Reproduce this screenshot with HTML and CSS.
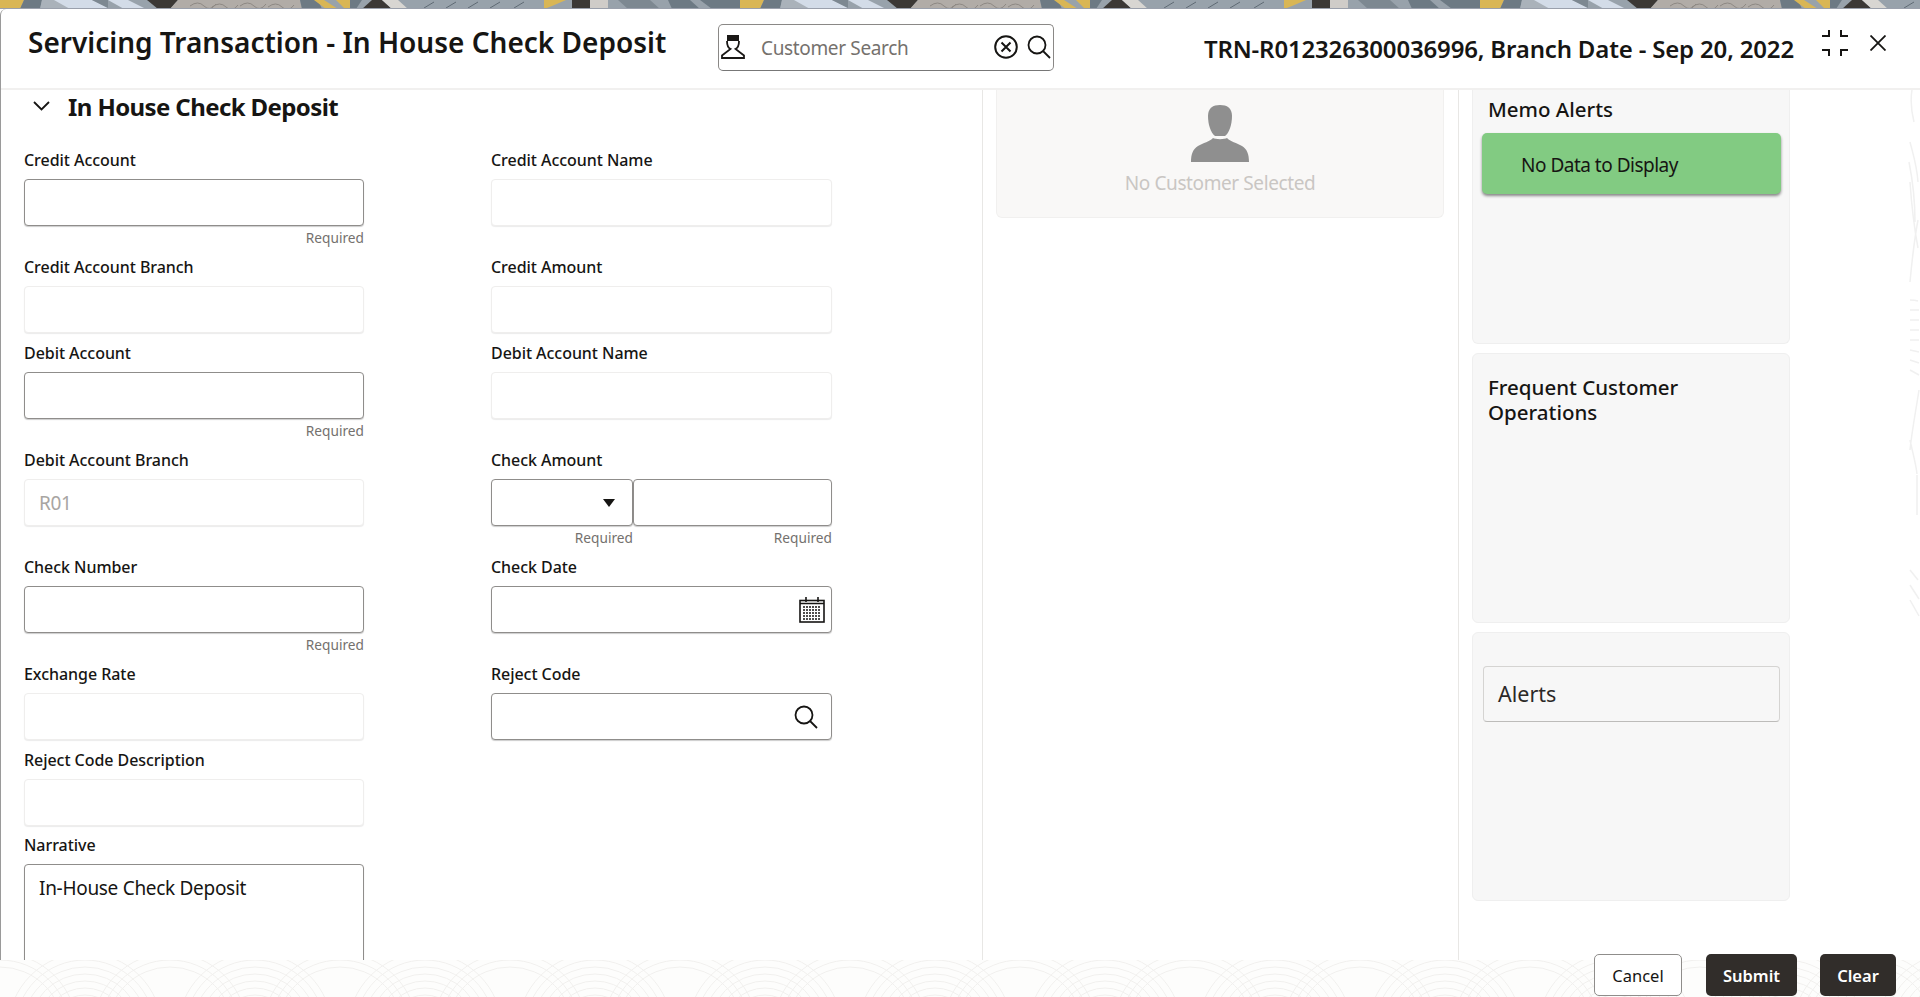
FILE: index.html
```html
<!DOCTYPE html>
<html lang="en">
<head>
    <meta charset="UTF-8">
    <title>Servicing Transaction - In House Check Deposit</title>
    <link rel="stylesheet" href="styles.css">
</head>
<body>
    <svg class="strip" width="100%" height="9">
        <defs>
            <pattern id="stripTile" width="740" height="9" patternUnits="userSpaceOnUse">
                <rect width="740" height="9" fill="#98a2ab"/>
                <polygon points="0,0 24,0 20,9 0,9" fill="#d9b655"/>
                <polygon points="24,0 42,0 40,9 20,9" fill="#6d7a84"/>
                <polygon points="42,0 58,0 74,9 40,9" fill="#aab2ba"/>
                <polygon points="54,0 92,0 110,9 70,9" fill="#d3dce8"/>
                <polygon points="92,0 108,0 108,9 110,9" fill="#7d8891"/>
                <polygon points="108,0 128,0 146,9 124,9" fill="#d3dce8"/>
                <polygon points="147,0 178,0 170,9 158,9" fill="#3b3835"/>
                <polygon points="178,0 300,0 302,9 170,9" fill="#b1aca7"/>
                <path d="M190 6q8-6 14 0t12-2M212 7q8-6 14 0t12-2M240 6q8-6 14 0t12-2M268 7q8-6 14 0t12-2" fill="none" stroke="#8d8883"/>
                <polygon points="300,0 318,0 322,9 302,9" fill="#6d7a84"/>
                <polygon points="314,0 324,0 338,9 326,9" fill="#d9b655"/>
                <polygon points="336,0 350,0 350,9 345,9" fill="#d9b655"/>
                <polygon points="350,0 362,0 356,9 350,9" fill="#6d7a84"/>
                <polygon points="372,0 382,0 392,9 362,9" fill="#3b3835"/>
                <polygon points="382,0 398,0 408,9 392,9" fill="#d8d6d2"/>
                <path d="M424 8l10-6M446 8l10-6M468 8l10-6M490 8l10-6M514 8l10-6" stroke="#5f6a74"/>
                <polygon points="544,0 566,0 552,6 544,9" fill="#d9b655"/>
                <rect x="572" width="18" height="9" fill="#3b3835"/>
                <rect x="590" width="18" height="9" fill="#cfccc8"/>
                <polygon points="618,0 650,0 660,9 628,9" fill="#7d8891"/>
                <polygon points="668,0 690,0 700,9 672,9" fill="#6d7a84"/>
                <polygon points="700,0 740,0 740,9 712,9" fill="#6d7a84"/>
            </pattern>
        </defs>
        <rect width="100%" height="9" fill="url(#stripTile)"/>
        <rect y="8" width="100%" height="1" fill="#9aa0ac"/>
    </svg>

    <div class="modal">
        <header class="modal-head">
            <h1 class="title">Servicing Transaction - In House Check Deposit</h1>
            <div class="search">
                <svg class="search-person" width="24" height="24" viewBox="0 0 24 24">
                    <rect x="6" y="0" width="12" height="6" fill="#1a1816"/>
                    <path d="M6 6c0 4 1.500 7 3.500 8L1 20.500V23h22v-2.500L14.500 14c2-1 3.500-4 3.500-8" fill="none" stroke="#1a1816" stroke-width="1.800"/>
                </svg>
                <input class="search-input" type="text" placeholder="Customer Search">
                <svg width="24" height="24" viewBox="0 0 24 24" fill="none" stroke="#161513" stroke-width="2">
                    <circle cx="12" cy="12" r="10.800"/>
                    <path d="M7.500 7.500l9 9M16.500 7.500l-9 9"/>
                </svg>
                <svg width="24" height="24" viewBox="0 0 24 24" fill="none" stroke="#161513" stroke-width="1.800">
                    <circle cx="10" cy="10" r="8.500"/>
                    <path d="M16 16l7 7"/>
                </svg>
            </div>
            <div class="trn">TRN-R012326300036996, Branch Date - Sep 20, 2022</div>
            <svg class="head-icon" width="26" height="26" viewBox="0 0 26 26" fill="none" stroke="#161513" stroke-width="2">
                <path d="M0 6h7V0M19 0v6h7M0 20h7v6M19 26v-6h7"/>
            </svg>
            <svg class="head-icon close-icon" width="16" height="16" viewBox="0 0 16 16" fill="none" stroke="#161513" stroke-width="1.800">
                <path d="M0.500 0.500l15 15M15.500 0.500l-15 15"/>
            </svg>
        </header>

        <main class="panes">
            <section class="form-pane">
                <div class="section-head">
                    <svg width="17" height="10" viewBox="0 0 17 10" fill="none" stroke="#161513" stroke-width="1.800">
                        <path d="M1 1l7.500 7.500L16 1"/>
                    </svg>
                    <h2>In House Check Deposit</h2>
                </div>

                <div class="form-grid">
                    <div class="field">
                        <label>Credit Account</label>
                        <input class="ctl" type="text">
                        <div class="hint">Required</div>
                    </div>
                    <div class="field">
                        <label>Credit Account Name</label>
                        <input class="ctl ro" type="text">
                    </div>
                    <div class="field">
                        <label>Credit Account Branch</label>
                        <input class="ctl ro" type="text">
                    </div>
                    <div class="field">
                        <label>Credit Amount</label>
                        <input class="ctl ro" type="text">
                    </div>
                    <div class="field">
                        <label>Debit Account</label>
                        <input class="ctl" type="text">
                        <div class="hint">Required</div>
                    </div>
                    <div class="field">
                        <label>Debit Account Name</label>
                        <input class="ctl ro" type="text">
                    </div>
                    <div class="field">
                        <label>Debit Account Branch</label>
                        <input class="ctl ro" type="text" value="R01">
                    </div>
                    <div class="field">
                        <label>Check Amount</label>
                        <div class="amount">
                            <div>
                                <div class="ctl box select"><span class="caret"></span></div>
                                <div class="hint">Required</div>
                            </div>
                            <div>
                                <input class="ctl" type="text">
                                <div class="hint">Required</div>
                            </div>
                        </div>
                    </div>
                    <div class="field">
                        <label>Check Number</label>
                        <input class="ctl" type="text">
                        <div class="hint">Required</div>
                    </div>
                    <div class="field">
                        <label>Check Date</label>
                        <div class="ctl box">
                            <svg width="26" height="26" viewBox="0 0 26 26" fill="none" stroke="#161513">
                                <rect x="1" y="3.500" width="24" height="21.500" stroke-width="1.600"/>
                                <path d="M1 6.500h24M7 0v5M19 0v5" stroke-width="1.600"/>
                                <path d="M4 10h18M4 13h18M4 16h18M4 19h18M4 22h18" stroke-width="1.500" stroke-dasharray="2 1"/>
                            </svg>
                        </div>
                    </div>
                    <div class="field">
                        <label>Exchange Rate</label>
                        <input class="ctl ro" type="text">
                    </div>
                    <div class="field">
                        <label>Reject Code</label>
                        <div class="ctl box lookup">
                            <svg width="24" height="24" viewBox="0 0 24 24" fill="none" stroke="#161513" stroke-width="1.800">
                                <circle cx="10" cy="10" r="8.500"/>
                                <path d="M16 16l7 7"/>
                            </svg>
                        </div>
                    </div>
                    <div class="field wide">
                        <label>Reject Code Description</label>
                        <input class="ctl ro" type="text">
                    </div>
                    <div class="field wide narrative-field">
                        <label>Narrative</label>
                        <textarea class="ctl narrative">In-House Check Deposit</textarea>
                    </div>
                </div>
            </section>

            <section class="mid-pane">
                <div class="customer-card">
                    <svg width="60" height="58" viewBox="0 0 60 58" fill="#8f8f8f">
                        <path d="M30 0c7 0 12 3 12 11 0 9-3 17-7 20h-10c-4-3-7-11-7-20C18 3 23 0 30 0z"/>
                        <path d="M23 33c2 1.500 12 1.500 14 0 3 3.500 10 5 15 8 5 3 7 8 7 16H1c0-8 2-13 7-16 5-3 12-4.500 15-8z"/>
                    </svg>
                    <div class="customer-empty">No Customer Selected</div>
                </div>
            </section>

            <aside class="side-pane">
                <div class="card memo-card">
                    <h3>Memo Alerts</h3>
                    <div class="memo-note">No Data to Display</div>
                </div>
                <div class="card freq-card">
                    <h3>Frequent Customer Operations</h3>
                </div>
                <div class="card alerts-card">
                    <div class="alerts-box">Alerts</div>
                </div>
            </aside>

            <div class="edge">
                <svg width="12" height="870" fill="none" stroke="#f0f0f0" stroke-width="1.500">
                    <path d="M4 0c-2 12 0 24 2 32M2 52c3 12 7 24 8 40M1 72c4 20 6 40 6 60M2 92c2 30 5 50 8 66M10 130c-3 16-6 40-8 62M2 210c3 0 5 0 8 1M2 220h9M2 230h9M2 240h9M2 250h9M2 260l9 2M2 270l9 3M2 280l9 5M11 300c-3 20-7 40-9 60M2 350c3 14 6 24 7 34M9 385v40M2 480l8 10M2 495l9 14M2 510l9 16"/>
                </svg>
            </div>
        </main>
    </div>

    <footer class="foot">
        <svg class="foot-bg" width="100%" height="37">
            <defs>
                <pattern id="footTile" width="170" height="90" patternUnits="userSpaceOnUse">
                    <g fill="none" stroke="#f1f0ee" stroke-width="1">
                        <circle cx="85" cy="70" r="14"/>
                        <circle cx="85" cy="70" r="21"/>
                        <circle cx="85" cy="70" r="28"/>
                        <circle cx="85" cy="70" r="35"/>
                        <circle cx="85" cy="70" r="42"/>
                        <circle cx="85" cy="70" r="49"/>
                        <circle cx="85" cy="70" r="56"/>
                        <circle cx="85" cy="70" r="63"/>
                        <circle cx="85" cy="70" r="70"/>
                        <circle cx="85" cy="70" r="77"/>
                        <circle cx="0" cy="70" r="63"/>
                        <circle cx="0" cy="70" r="70"/>
                        <circle cx="0" cy="70" r="77"/>
                        <circle cx="170" cy="70" r="63"/>
                        <circle cx="170" cy="70" r="70"/>
                        <circle cx="170" cy="70" r="77"/>
                    </g>
                </pattern>
            </defs>
            <rect width="100%" height="37" fill="#fdfdfc"/>
            <rect width="100%" height="37" fill="url(#footTile)"/>
        </svg>
        <button class="btn btn-plain">Cancel</button>
        <button class="btn btn-dark">Submit</button>
        <button class="btn btn-dark btn-clear">Clear</button>
    </footer>
</body>
</html>
```

FILE: styles.css
```css
html, body {
    margin: 0;
    padding: 0;
    height: 100%;
}
body {
    display: flex;
    flex-direction: column;
    height: 997px;
    overflow: hidden;
    background: #fff;
    color: #161513;
    font-family: "Noto Sans", "Open Sans", sans-serif;
}
.strip {
    display: block;
    flex: none;
    background: #98a2ab;
}
.modal {
    flex: 1;
    min-height: 0;
    display: flex;
    flex-direction: column;
    background: #fff;
    border-left: 1px solid #9a9a9a;
    border-radius: 6px 0 0 0;
}

/* header */
.modal-head {
    flex: none;
    height: 79px;
    display: flex;
    align-items: flex-start;
    padding: 0 34px 0 27px;
    border-bottom: 2px solid #f1f0ef;
}
.title {
    width: 690px;
    margin: 14px 0 0;
    font-size: 28px;
    line-height: 38px;
    font-weight: 600;
    white-space: nowrap;
}
.search {
    width: 336px;
    height: 47px;
    margin-top: 15px;
    box-sizing: border-box;
    display: flex;
    align-items: center;
    gap: 9px;
    padding: 0 2px 2px 2px;
    border: 1px solid #8a8886;
    border-bottom-color: #777;
    border-radius: 5px;
}
.search-person {
    margin-right: 7px;
}
.search-input {
    flex: 1;
    min-width: 0;
    border: 0;
    outline: 0;
    padding: 3px 0 0;
    font: 400 19px "Noto Sans", sans-serif;
    letter-spacing: -0.35px;
    color: #161513;
}
.search-input::placeholder {
    color: #75716d;
    opacity: 1;
}
.trn {
    margin: 22px 0 0 auto;
    font-size: 24px;
    line-height: 36px;
    font-weight: 600;
    letter-spacing: -0.17px;
    white-space: nowrap;
}
.head-icon {
    margin: 21px 0 0 28px;
    flex: none;
}
.close-icon {
    margin: 26px 0 0 22px;
}

/* three panes */
.panes {
    flex: 1;
    min-height: 0;
    display: flex;
    overflow: hidden;
}
.form-pane {
    width: 982px;
    flex: none;
    box-sizing: border-box;
    padding-left: 23px;
    border-right: 1px solid #e8e7e5;
}
.section-head {
    height: 32px;
    margin-bottom: 28px;
    display: flex;
    align-items: center;
    gap: 18px;
    padding-left: 9px;
}
.section-head h2 {
    margin: 0;
    font-size: 24px;
    font-weight: 700;
    letter-spacing: -0.6px;
    white-space: nowrap;
}
.form-grid {
    display: grid;
    grid-template-columns: 340px 341px;
    column-gap: 127px;
    row-gap: 10px;
}
.field.wide {
    grid-column: 1;
}
.narrative-field {
    margin-top: -1px;
}
.field label {
    display: block;
    height: 20px;
    margin-bottom: 9px;
    font-size: 16px;
    line-height: 20px;
    font-weight: 500;
    letter-spacing: -0.05px;
}
.ctl {
    display: block;
    width: 100%;
    height: 47px;
    box-sizing: border-box;
    margin: 0;
    padding: 0 14px;
    background: #fff;
    border: 1px solid #8f8d8b;
    border-radius: 4px;
    box-shadow: 0 1px 1px rgba(0, 0, 0, 0.2);
    font: 400 19px "Noto Sans", sans-serif;
    letter-spacing: -0.3px;
    color: #161513;
    outline: 0;
}
.ctl.ro {
    border-color: #efeeed;
    box-shadow: 0 1px 1px rgba(0, 0, 0, 0.08);
    color: #a8a5a2;
}
.box {
    display: flex;
    align-items: center;
    justify-content: flex-end;
    padding: 0 6px 0 0;
}
.select {
    padding-right: 17px;
}
.lookup {
    padding-right: 13px;
}
.caret {
    width: 0;
    height: 0;
    border-left: 6px solid transparent;
    border-right: 6px solid transparent;
    border-top: 8px solid #161513;
}
.hint {
    height: 21px;
    font-size: 13.7px;
    line-height: 23px;
    color: #74716e;
    text-align: right;
}
.amount {
    display: grid;
    grid-template-columns: 142px 199px;
}
.narrative {
    height: 130px;
    padding: 9px 14px;
    resize: none;
    line-height: 28px;
}

/* middle pane */
.mid-pane {
    width: 476px;
    flex: none;
    box-sizing: border-box;
    padding: 0 14px 0 13px;
    border-right: 1px solid #e8e7e5;
}
.customer-card {
    height: 128px;
    box-sizing: border-box;
    padding-top: 15px;
    display: flex;
    flex-direction: column;
    align-items: center;
    background: #f9f8f7;
    border: 1px solid #f1f0ef;
    border-top: 0;
    border-radius: 0 0 6px 6px;
}
.customer-empty {
    margin-top: 7px;
    font-size: 19px;
    line-height: 27px;
    letter-spacing: -0.4px;
    color: #c9c6c3;
}

/* side cards */
.side-pane {
    width: 318px;
    flex: none;
    margin-left: 13px;
}
.card {
    box-sizing: border-box;
    background: #f7f7f7;
    border: 1px solid #efefef;
    border-radius: 6px;
    margin-bottom: 9px;
}
.card h3 {
    margin: 0;
    font-size: 20.500px;
    line-height: 25px;
    font-weight: 500;
}
.memo-card {
    height: 254px;
    padding-top: 7px;
    border-top: 0;
    border-radius: 0 0 6px 6px;
}
.memo-card h3 {
    margin-left: 15px;
}
.memo-note {
    width: 299px;
    height: 61px;
    box-sizing: border-box;
    margin: 11px 0 0 9px;
    padding: 2px 0 0 39px;
    display: flex;
    align-items: center;
    background: #82cb82;
    border-radius: 5px;
    box-shadow: 0 2px 3px rgba(0, 0, 0, 0.45);
    font-size: 19px;
    letter-spacing: -0.5px;
}
.freq-card {
    height: 270px;
    padding: 21px 15px 0;
}
.alerts-card {
    height: 269px;
    padding: 33px 9px 0 10px;
}
.alerts-box {
    height: 56px;
    box-sizing: border-box;
    padding: 0 0 2px 14px;
    display: flex;
    align-items: center;
    border: 1px solid #d5d4d2;
    border-bottom-color: #bdbcba;
    border-radius: 4px;
    font-size: 21.500px;
    color: #2b2927;
}
.edge {
    margin-left: auto;
    width: 12px;
    flex: none;
}
.edge svg {
    display: block;
}

/* footer */
.foot {
    flex: none;
    position: relative;
    height: 37px;
    display: flex;
    align-items: flex-end;
    justify-content: flex-end;
    gap: 23px;
    padding: 0 24px 1px 0;
    box-sizing: border-box;
}
.foot-bg {
    position: absolute;
    left: 0;
    top: 0;
}
.btn {
    position: relative;
    flex: none;
    height: 42px;
    box-sizing: border-box;
    border-radius: 5px;
    font: 600 16.500px "Noto Sans", sans-serif;
    cursor: pointer;
}
.btn-plain {
    width: 88px;
    margin-right: 1px;
    background: #fff;
    border: 1px solid #8f8d8b;
    color: #161513;
    font-weight: 400;
}
.btn-dark {
    width: 91px;
    background: #312d2a;
    border: 0;
    color: #fff;
}
.btn-clear {
    width: 76px;
}
```
